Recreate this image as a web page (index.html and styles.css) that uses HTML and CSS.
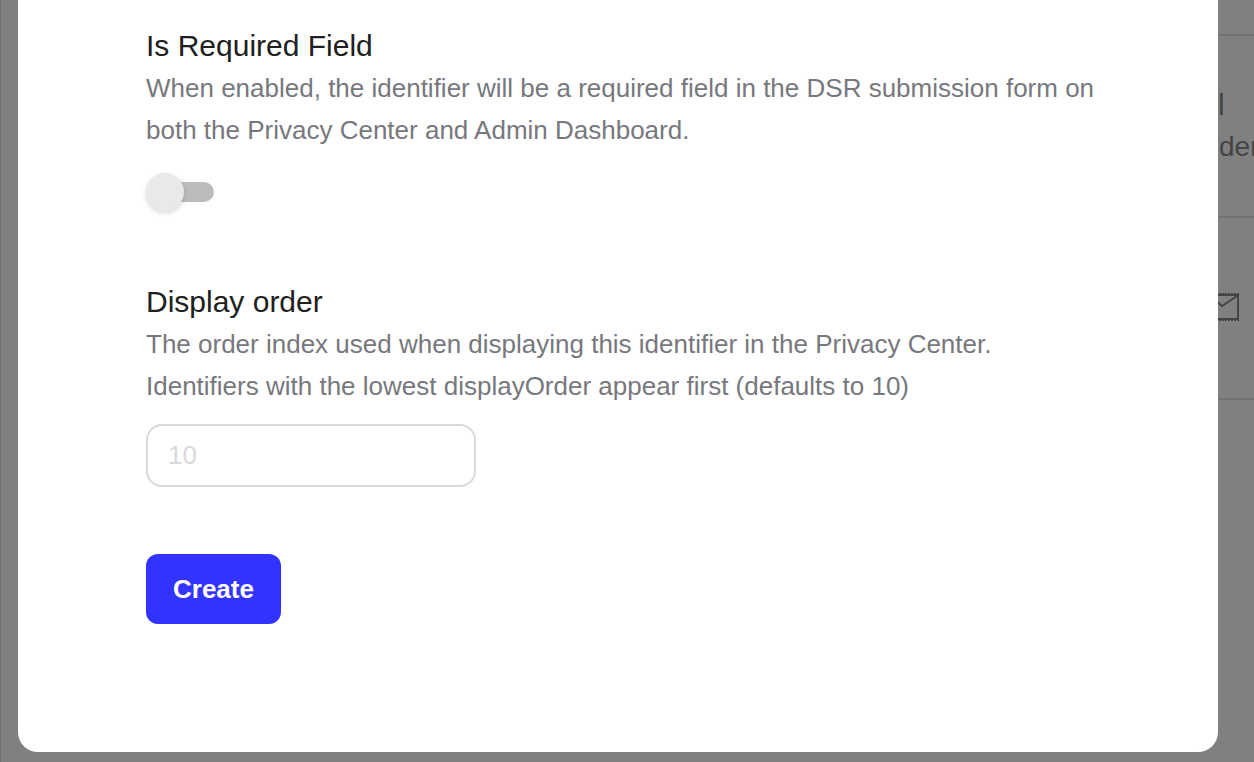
FILE: index.html
```html
<!DOCTYPE html>
<html lang="en">
<head>
    <meta charset="UTF-8">
    <meta name="viewport" content="width=device-width, initial-scale=1.0">
    <title>Create identifier</title>
    <link rel="stylesheet" href="styles.css">
</head>
<body>
    <div class="page">
        <div class="page-left"></div>

        <main class="modal">
            <form class="form">
                <div class="field">
                    <label class="field-title" for="required">Is Required Field</label>
                    <p class="field-text">When enabled, the identifier will be a required field in the DSR submission form on<br>both the Privacy Center and Admin Dashboard.</p>
                    <input class="switch" id="required" type="checkbox" role="switch">
                </div>

                <div class="field">
                    <label class="field-title" for="order">Display order</label>
                    <p class="field-text">The order index used when displaying this identifier in the Privacy Center.<br>Identifiers with the lowest displayOrder appear first (defaults to 10)</p>
                    <input class="text-input" id="order" type="text" inputmode="numeric" placeholder="10">
                </div>

                <button class="create-btn" type="button">Create</button>
            </form>
        </main>

        <!-- dimmed list behind the modal -->
        <div class="page-right">
            <div class="row row-first"></div>
            <div class="row">
                <div class="row-title">l</div>
                <div class="row-text">der</div>
            </div>
            <div class="row row-icon">
                <svg class="mail" width="44" height="28" viewBox="0 0 44 28" fill="none" stroke="#444" stroke-width="2">
                    <rect x="9" y="2" width="34" height="24"/>
                    <path d="M20 7l7 6L42 3"/>
                    <path d="M9 1h35M9 27h35" stroke-dasharray="2 1"/>
                </svg>
            </div>
        </div>
    </div>
</body>
</html>
```
FILE: styles.css
```css
* {
    box-sizing: border-box;
}
body {
    margin: 0;
    background: #808080;
    font-family: "Liberation Sans", Arial, sans-serif;
}
.page {
    display: grid;
    grid-template-columns: 18px minmax(0, 1fr) 36px;
    min-height: 100vh;
}
.page-left {
    border-left: 1px solid #747474;
}
.modal {
    align-self: start;
    padding: 25px 96px 128px 128px;
    background: #fff;
    border-radius: 0 0 20px 20px;
}
.form {
    display: flex;
    flex-direction: column;
    align-items: flex-start;
    gap: 67px;
}
.field {
    display: flex;
    flex-direction: column;
    align-items: flex-start;
}
.field-title {
    color: #202020;
    font-size: 30px;
    line-height: 42px;
}
.field-text {
    margin: 0;
    color: #77787d;
    font-size: 26px;
    line-height: 42px;
}
.switch {
    appearance: none;
    display: flex;
    align-items: center;
    width: 68px;
    height: 44px;
    margin: 19px 0 0;
    cursor: pointer;
}
.switch::before {
    content: "";
    flex: none;
    width: 38px;
    height: 38px;
    border-radius: 50%;
    background: #e8e9eb;
    box-shadow: 0 2px 5px rgba(0, 0, 0, 0.16);
    z-index: 1;
}
.switch::after {
    content: "";
    flex: none;
    width: 48px;
    height: 20px;
    margin-left: -18px;
    border-radius: 10px;
    background: #bbbcbe;
}
.text-input {
    width: 330px;
    height: 63px;
    margin: 17px 0 0;
    padding: 0 20px;
    border: 2px solid #d8d9dd;
    border-radius: 16px;
    background: #fff;
    font-family: inherit;
    font-size: 26px;
}
.text-input::placeholder {
    color: #d8d9dd;
}
.create-btn {
    height: 70px;
    padding: 0 27px;
    border: none;
    border-radius: 12px;
    background: #3333ff;
    color: #fff;
    font-family: inherit;
    font-size: 26px;
    font-weight: bold;
    cursor: pointer;
}
.page-right {
    overflow: hidden;
}
.row {
    height: 182px;
    padding: 48px 0;
    border-bottom: 2px solid #727272;
    color: #444;
    line-height: 42px;
}
.row-first {
    height: 36px;
    padding: 0;
}
.row-title {
    font-size: 30px;
}
.row-text {
    padding-left: 1px;
    font-size: 28px;
}
.row-icon {
    display: flex;
    align-items: center;
    justify-content: flex-end;
    padding: 0 15px 2px 0;
}
.mail {
    flex: none;
}
```
